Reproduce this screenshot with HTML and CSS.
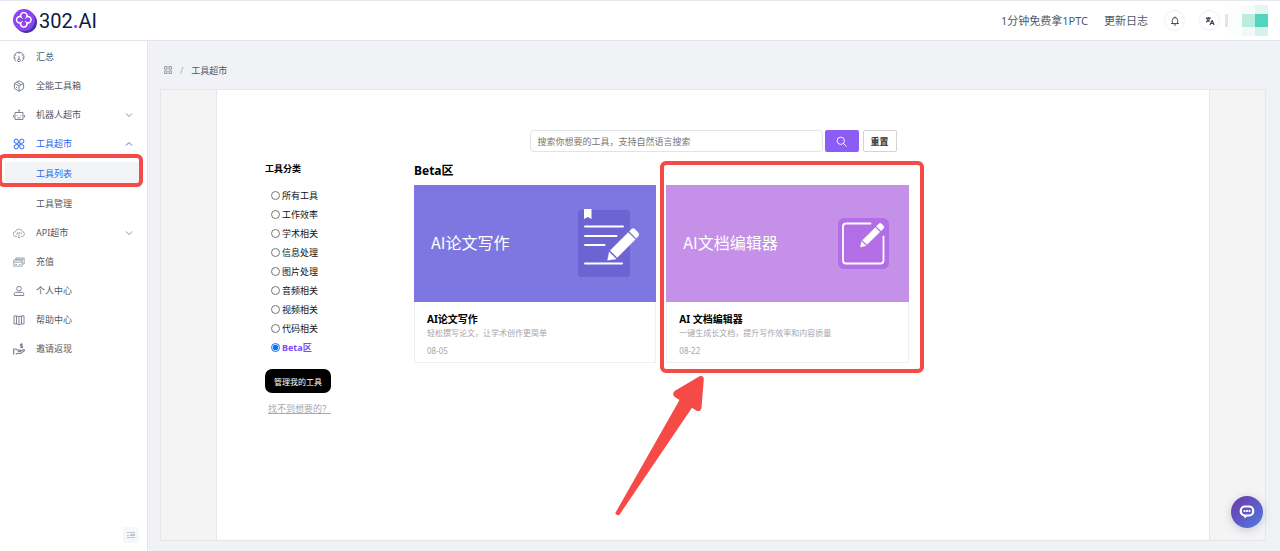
FILE: index.html
```html
<!DOCTYPE html>
<html lang="zh-CN">
<head>
<meta charset="utf-8">
<meta name="viewport" content="width=device-width, initial-scale=1">
<title>302.AI 工具超市</title>
<link rel="stylesheet" href="styles.css">
</head>
<body>
<header class="topbar">
  <a class="brand" href="#">
    <svg class="brand-mark" viewBox="0 0 24 24" aria-hidden="true">
      <circle cx="13.2" cy="13.2" r="10.8" fill="#3d35a8"/>
      <circle cx="11" cy="11" r="11" fill="#8e44f0"/>
      <path d="M7.800 7.800a3.200 3.200 0 1 1 6 0 3.200 3.200 0 1 1 0 6 3.200 3.200 0 1 1-6 0 3.200 3.200 0 1 1 0-6z" fill="none" stroke="#fff" stroke-width="1.500" stroke-linejoin="round"/>
      <path d="M8 8l1.300 1.300M13.600 8l-1.300 1.300M8 13.600l1.300-1.300M13.600 13.600l-1.300-1.300" stroke="#fff" stroke-width="1" stroke-linecap="round"/>
    </svg>
    <span class="brand-name">302<span class="brand-dot">.</span>AI</span>
  </a>
  <nav class="top-actions" aria-label="快捷操作">
    <a class="top-link" href="#">1分钟免费拿1PTC</a>
    <a class="top-link" href="#">更新日志</a>
    <button class="round-btn" type="button" aria-label="通知">
      <svg viewBox="0 0 12 12" aria-hidden="true"><path d="M2.800 9V5.200a3.200 3.200 0 0 1 6.400 0V9M1.800 9h8.400M5 10.700h2M6 1v1" fill="none" stroke="#3b4350" stroke-width="1.100" stroke-linecap="round"/></svg>
    </button>
    <button class="round-btn lang-btn" type="button" aria-label="语言">
      <svg viewBox="0 0 12 12" aria-hidden="true"><path d="M1 2.500h6M4 1.200v1.300M5.800 2.500C5.200 5 3.500 6.500 1.200 7.500M2.200 3.500C3 5 4 6 5.500 6.700M6 10.800l2.300-5.300h.4L11 10.800M6.900 9h3.200" fill="none" stroke="#3b4350" stroke-width="1.400"/></svg>
    </button>
    <svg class="account" viewBox="0 0 43 31" shape-rendering="crispEdges" aria-hidden="true">
      <path fill="#e5e5e7" d="M0 9h3v13H0z"/>
      <path fill="#fcfdfd" d="M3 0h14v31H3z"/>
      <path fill="#f7fcfb" d="M17 0h13v9H17z"/>
      <path fill="#e4f6f2" d="M30 0h13v9H30z"/>
      <path fill="#bcebe0" d="M17 9h13v13H17z"/>
      <path fill="#50d6be" d="M30 9h13v13H30z"/>
      <path fill="#f1faf8" d="M17 22h13v9H17z"/>
      <path fill="#d6f2eb" d="M30 22h13v9H30z"/>
    </svg>
  </nav>
</header>

<div class="shell">
  <aside class="sidebar">
    <nav class="menu" aria-label="主菜单">
      <a class="menu-item" href="#"><svg class="ico" viewBox="0 0 12 12"><path d="M3.200 10.300A5 5 0 1 1 8.800 10.300M6 1v1.800M2 3.800l1.200.8M10 3.800l-1.200.8M1.200 7h1.400M10.800 7H9.400M6 5v3"/><circle cx="6" cy="9.300" r="1.400"/></svg>汇总</a>
      <a class="menu-item" href="#"><svg class="ico" viewBox="0 0 12 12"><path d="M6 .8l4.600 2.600v5.200L6 11.200 1.400 8.600V3.400zM1.400 3.400L6 6l4.600-2.600M6 6v5.200M3.700 2.100l4.600 2.600M3.500 7v1"/></svg>全能工具箱</a>
      <a class="menu-item" href="#"><svg class="ico" viewBox="0 0 12 12"><path d="M2 3.500h8v7H2zM6 3.500v-2M5 1.300h2M.6 6v2.500M11.400 6v2.500M4.200 6v1M7.800 6v1M4.500 8.800h3"/></svg>机器人超市<svg class="chev" viewBox="0 0 8 8"><path d="M1 2.500l3 3 3-3"/></svg></a>
      <a class="menu-item is-open" href="#"><svg class="ico" viewBox="0 0 12 12"><path d="M5.300 5.300H3.200a2.100 2.100 0 1 1 2.100-2.100zM6.700 5.300h2.100a2.100 2.100 0 1 0-2.100-2.100zM5.300 6.700H3.200a2.100 2.100 0 1 0 2.100 2.100zM6.700 6.700h2.100a2.100 2.100 0 1 1-2.100 2.100z"/></svg>工具超市<svg class="chev" viewBox="0 0 8 8"><path d="M1 5.500l3-3 3 3"/></svg></a>
      <div class="submenu">
        <a class="menu-item sub-item is-active" href="#" aria-current="page">工具列表<span class="mark-nav"></span></a>
        <a class="menu-item sub-item" href="#">工具管理</a>
      </div>
      <a class="menu-item" href="#"><svg class="ico ico-light" viewBox="0 0 12 12"><path d="M4 9.500H2.800a2.400 2.400 0 0 1-.3-4.800A3.600 3.600 0 0 1 9.400 4.600a2.500 2.500 0 0 1 0 4.900H8M6 8v2.500M5 10l1 1 1-1M3.800 7.500l.7-2 .7 2M6.200 7.300V5.600h1M8.400 5.500v1.900"/></svg>API超市<svg class="chev" viewBox="0 0 8 8"><path d="M1 2.500l3 3 3-3"/></svg></a>
      <a class="menu-item" href="#"><svg class="ico ico-light" viewBox="0 0 12 12"><path d="M.8 4.200h8.400v6H.8zM.8 6.200h8.400M2.800 4V2h8.400v6H9.400M2.200 8.500h2M6 8.500h1.500M2.800 3.200h8"/></svg>充值</a>
      <a class="menu-item" href="#"><svg class="ico" viewBox="0 0 12 12"><circle cx="6" cy="3.700" r="2.300"/><path d="M1.300 10.500V9c0-1 .8-1.700 1.700-1.700h6c.9 0 1.700.7 1.700 1.700v1.500z"/></svg>个人中心</a>
      <a class="menu-item" href="#"><svg class="ico" viewBox="0 0 12 12"><path d="M1 1.800c2 0 3.600.2 5 1 1.400-.8 3-1 5-1v8c-2 0-3.600.2-5 1-1.400-.8-3-1-5-1zM6 2.800v8M3.500 2v8M8.500 2v8"/></svg>帮助中心</a>
      <a class="menu-item" href="#"><svg class="ico ico-bold" viewBox="0 0 12 12"><path d="M.7 11.500V6h1.800c1.500 0 2 1.200 3 1.200h1.300c1 0 1 1.400 0 1.400H4.800M7.500 8.200l2.800-1.500c1-.4 1.500.6.8 1.200L7.500 10.500H4L2.800 11.300M9.700 1.500C8.500.8 7.200 1.300 7.400 2.200c.2 1 2.300.6 2.300 1.600 0 .9-1.400 1.100-2.400.4M8.500.2v5"/></svg>邀请返现</a>
    </nav>
    <button class="collapse-btn" type="button" aria-label="收起菜单">
      <svg viewBox="0 0 8 8" aria-hidden="true"><path d="M0 1.500h8M3 3.500h5M0 6.500h8M0 4.500h2M3 4.500h5" fill="none" stroke="#98a1b0" stroke-width=".6"/></svg>
    </button>
  </aside>

  <main class="content">
    <nav class="crumbs" aria-label="面包屑">
      <svg viewBox="0 0 8 8" aria-hidden="true"><path d="M.5.500h2.600v2.600H.5zM4.900.500h2.600v2.600H4.900zM.5 4.900h2.600v2.600H.5zM4.900 4.900h2.600v2.600H4.900z" fill="none" stroke="#8b95a3" stroke-width=".9"/></svg>
      <span class="crumb-sep">/</span>
      <span>工具超市</span>
    </nav>
    <div class="frame">
      <div class="page">
        <form class="search">
          <input class="search-input" type="text" placeholder="搜索你想要的工具，支持自然语言搜索" aria-label="搜索工具">
          <button class="search-btn" type="button" aria-label="搜索">
            <svg viewBox="0 0 12 12" aria-hidden="true"><circle cx="5.200" cy="5.200" r="4" fill="none" stroke="#fff"/><path d="M8.200 8.200l3 3" stroke="#fff" stroke-linecap="round"/></svg>
          </button>
          <button class="reset-btn" type="reset">重置</button>
        </form>
        <div class="columns">
          <section class="filters">
            <h2 class="filters-title">工具分类</h2>
            <div class="radio-list">
              <label class="radio"><input type="radio" name="category">所有工具</label>
              <label class="radio"><input type="radio" name="category">工作效率</label>
              <label class="radio"><input type="radio" name="category">学术相关</label>
              <label class="radio"><input type="radio" name="category">信息处理</label>
              <label class="radio"><input type="radio" name="category">图片处理</label>
              <label class="radio"><input type="radio" name="category">音频相关</label>
              <label class="radio"><input type="radio" name="category">视频相关</label>
              <label class="radio"><input type="radio" name="category">代码相关</label>
              <label class="radio"><input type="radio" name="category" checked><span>Beta区</span></label>
            </div>
            <button class="manage-btn" type="button">管理我的工具</button>
            <a class="missing-link" href="#">找不到想要的？</a>
          </section>
          <section class="results">
            <h1 class="results-title">Beta区</h1>
            <div class="cards">
              <article class="card">
                <div class="banner banner-indigo">
                  <span>AI论文写作</span>
                  <svg class="art-paper" viewBox="0 0 61 69" aria-hidden="true">
                    <rect x="0" y="1" width="52" height="67" rx="3" fill="#6d64d4"/>
                    <path d="M6 0h7.500v10L9.800 8 6 10z" fill="#fff"/>
                    <path d="M7 17.500h38M7 27h31.500M7 36h19.500M7 54.500h37" stroke="#fff" stroke-width="2" stroke-linecap="round"/>
                    <path d="M32.200 41.500L50.200 23.500l7 7-18 18zM51.400 22.300l2-2q1.800-1.700 3.600 0l3.200 3.400q1.600 1.800 0 3.600l-2 2zM31.200 43l7 7-8.600 1.200z" fill="#fff" stroke="#fff" stroke-width=".4"/>
                  </svg>
                </div>
                <div class="card-body">
                  <h3 class="card-title">AI论文写作</h3>
                  <p class="card-text">轻松撰写论文，让学术创作更简单</p>
                  <p class="card-date">08-05</p>
                </div>
              </article>
              <article class="card">
                <div class="banner banner-violet">
                  <span>AI文档编辑器</span>
                  <svg class="art-edit" viewBox="0 0 51 51" aria-hidden="true">
                    <rect width="51" height="51" rx="6" fill="#b36ee6"/>
                    <path d="M32.500 5.500H8q-3 0-3 3V42.500q0 3 3 3H42.500q3 0 3-3V18.500" fill="none" stroke="#fff" stroke-width="1.800" stroke-linecap="round"/>
                    <path d="M24.500 22.300L37.500 9.500l4.200 4.500-12.700 12.500zM38.500 8.300l2.500-2.500q1.200-1.200 2.400 0l2 2q1.200 1.300 0 2.600L43 12.800zM23.600 23.600l4.300 4.100-5.400 1.300z" fill="#fff" stroke="#fff" stroke-width=".5"/>
                  </svg>
                </div>
                <div class="card-body">
                  <h3 class="card-title">AI 文档编辑器</h3>
                  <p class="card-text">一键生成长文档，提升写作效率和内容质量</p>
                  <p class="card-date">08-22</p>
                </div>
                <span class="mark-card"></span>
                <svg class="mark-arrow" viewBox="0 0 92 142" aria-hidden="true"><path d="M1.200 138.200L65.500 25l-5-3.200q-3-3 .5-6L85.500 1.200q4-1.200 4.300 3L87.500 33q-.8 4.200-5 2.700l-4.500-3L5.800 139.200q-1 1.800-2.800.8z" fill="#f64a46"/></svg>
              </article>
            </div>
          </section>
        </div>
      </div>
    </div>
  </main>
</div>

<button class="chat-btn" type="button" aria-label="在线客服">
  <svg viewBox="0 0 16 14" aria-hidden="true"><rect x="1.800" y="1.500" width="12.400" height="9" rx="4" fill="none" stroke="#fff" stroke-width="2.200"/><path d="M4.500 10.500h4L6 13.500z" fill="#fff"/><path d="M4.600 6h6.800" stroke="#fff" stroke-width="1.800" stroke-dasharray="1.800 .7"/></svg>
</button>
</body>
</html>
```

FILE: styles.css
```css
* { box-sizing: border-box; }

body {
  margin: 0;
  min-height: 100vh;
  display: flex;
  flex-direction: column;
  font: 9px/15px "Noto Sans", "Noto Sans CJK SC", sans-serif;
  color: #4f5a66;
  background: #f0f2f5;
}

a { color: inherit; text-decoration: none; }
button { font: inherit; padding: 0; border: 0; cursor: pointer; display: flex; align-items: center; justify-content: center; }
h1, h2, h3, p { margin: 0; }
svg { display: block; flex: none; }

.topbar {
  display: flex;
  align-items: center;
  justify-content: space-between;
  height: 41px;
  padding: 0 12px 0 13px;
  background: #fff;
  border-top: 1px solid #e6e7ee;
  border-bottom: 1px solid #e4e5eb;
}
.brand { display: flex; align-items: center; gap: 2px; }
.brand-mark { width: 24px; height: 24px; }
.brand-name { font: 20px/24px Roboto, sans-serif; color: #0c1c46; }
.brand-dot { font-weight: 700; color: #8e44f0; }

.top-actions { display: flex; align-items: center; font-size: 11px; }
.top-link { margin-right: 16px; }
.round-btn {
  width: 21px;
  height: 21px;
  background: #fff;
  border: 1px solid #f1f1f4;
  border-radius: 50%;
}
.round-btn svg { width: 10px; height: 10px; }
.lang-btn { margin: 0 5px 0 14px; }
.account { width: 43px; height: 31px; }

.shell { flex: 1; display: flex; }

.sidebar {
  flex: none;
  width: 148px;
  display: flex;
  flex-direction: column;
  padding: 1px 0 8px;
  background: #fff;
  border-right: 1px solid #e4e5ea;
}
.menu { display: flex; flex-direction: column; }
.menu-item {
  position: relative;
  display: flex;
  align-items: center;
  gap: 11px;
  height: 29px;
  padding: 0 14px 0 13px;
}
.ico { width: 12px; height: 12px; fill: none; stroke: #7a8594; stroke-width: 1; }
.ico-light { stroke-width: .7; }
.ico-bold { stroke-width: 1.2; }
.chev { width: 8px; height: 8px; margin-left: auto; fill: none; stroke: #7a8594; stroke-width: .9; }
.is-open { color: #2b66f6; }
.is-open .ico, .is-open .chev { stroke: #2b66f6; }
.submenu { display: flex; flex-direction: column; gap: 1px; padding-top: 1px; }
.sub-item { padding-left: 36px; }
.is-active { z-index: 0; color: #2b66f6; }
.is-active::before {
  content: "";
  position: absolute;
  inset: 3px 8px 3px 5px;
  background: #f1f3f5;
  z-index: -1;
}
.mark-nav {
  position: absolute;
  inset: -5px 4px 1px -2px;
  border: 4px solid #f64a46;
  border-radius: 6px;
}
.collapse-btn {
  width: 16px;
  height: 16px;
  margin: auto 8px 0 auto;
  background: #f5f7fa;
  border-radius: 2px;
}
.collapse-btn svg { width: 8px; height: 8px; }

.content {
  flex: 1;
  min-width: 0;
  display: flex;
  flex-direction: column;
  padding: 21px 14px 10px 12px;
}
.crumbs { display: flex; align-items: center; gap: 8px; height: 16px; margin-bottom: 11px; padding-left: 4px; }
.crumbs svg { width: 8px; height: 8px; }
.crumb-sep { color: #a9b0ba; }

.frame {
  flex: 1;
  display: flex;
  padding: 0 55px;
  background: #f4f4f4;
  border: 1px solid #e5e6ea;
}
.page {
  flex: 1;
  min-width: 0;
  padding: 40px 48px;
  background: #fff;
  border: solid #e5e6ea;
  border-width: 0 1px;
}

.search { display: flex; justify-content: center; }
.search-input {
  width: 293px;
  height: 22px;
  padding: 0 7px;
  font: inherit;
  border: 1px solid #e2e3e6;
  border-radius: 4px;
  outline: 0;
}
.search-input::placeholder { color: #757575; opacity: 1; }
.search-btn { width: 34px; height: 22px; margin: 0 4px 0 2px; background: #8b5cf6; border-radius: 2px; }
.search-btn svg { width: 11px; height: 11px; }
.reset-btn {
  width: 34px;
  height: 22px;
  font-weight: 700;
  color: #333;
  background: #fff;
  border: 1px solid #d4d4d6;
  border-radius: 2px;
}

.columns { display: flex; margin-top: 9px; color: #111; }
.filters { flex: none; width: 149px; display: flex; flex-direction: column; align-items: flex-start; }
.filters-title { font-size: 9px; line-height: 16px; color: #000; }
.radio-list { display: flex; flex-direction: column; padding: 9px 0 12px 6px; }
.radio { display: flex; align-items: center; gap: 2px; line-height: 19px; }
.radio input { width: 9px; height: 9px; margin: 0; accent-color: #0b6ef9; }
.radio span { font-weight: 700; color: #7c4df5; }
.manage-btn { width: 66px; height: 24px; font-size: 8px; color: #fff; background: #000; border-radius: 7px; }
.missing-link { margin: 8px 0 0 3px; color: #a9a9ad; text-decoration: underline; }

.results { flex: 1; min-width: 0; }
.results-title { margin-bottom: 4px; font-size: 12px; line-height: 20px; color: #000; }
.cards { display: grid; grid-template-columns: repeat(3, 1fr); gap: 10px; }
.card { position: relative; }
.banner {
  display: flex;
  align-items: center;
  justify-content: space-between;
  height: 117px;
  padding: 0 17px;
  font-family: "Noto Sans CJK SC", sans-serif;
  font-size: 16px;
  line-height: 24px;
  color: #fff;
}
.banner span { padding-bottom: 3px; }
.banner-indigo { background: #7e77e1; }
.banner-violet { background: #c490e8; }
.art-paper { width: 61px; height: 69px; }
.art-edit { width: 51px; height: 51px; margin-right: 3px; }
.card-body { padding: 10px 12px 5px; border: solid #f0f0f2; border-width: 0 1px 1px; }
.card-title { font-size: 10px; line-height: 15px; color: #000; }
.card-text { font-size: 8px; line-height: 12px; color: #a6a6aa; }
.card-date { margin-top: 6px; font-size: 8px; line-height: 12px; color: #a6a6aa; }

.mark-card {
  position: absolute;
  inset: -24px -15px -10px -6px;
  border: 4px solid #f64a46;
  border-radius: 6px;
}
.mark-arrow { position: absolute; left: -52px; top: 190px; width: 92px; height: 142px; }

.chat-btn {
  position: fixed;
  right: 17px;
  bottom: 23px;
  width: 32px;
  height: 32px;
  border-radius: 50%;
  background: linear-gradient(135deg, #6f36a8, #4f7ce0);
  box-shadow: 0 2px 8px rgba(60, 70, 140, .25);
}
.chat-btn svg { width: 16px; height: 14px; }
```
